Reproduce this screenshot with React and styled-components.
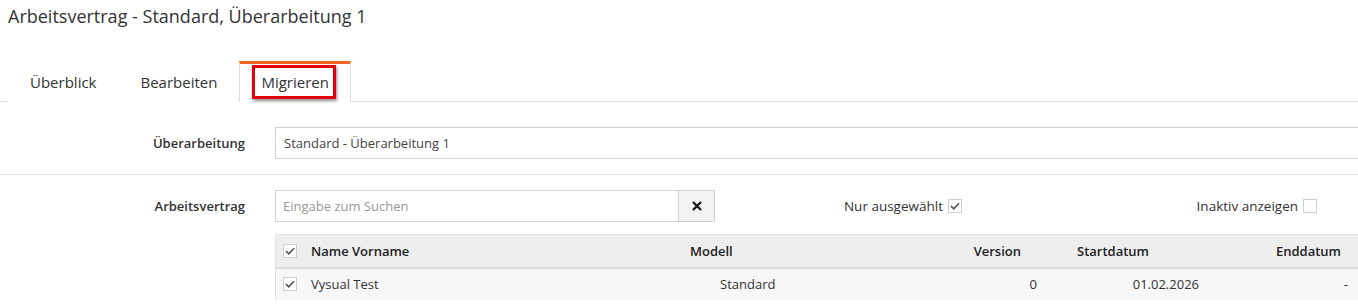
import React from 'react'
import styled, { createGlobalStyle } from 'styled-components'

const Global = createGlobalStyle`
  html, body {
    margin: 0;
    padding: 0;
    background: #fff;
    overflow: hidden;
  }
  body {
    font-family: "Open Sans", "Noto Sans", sans-serif;
    color: #333;
    font-size: 13px;
  }
`

const Page = styled.div`
  width: 1358px;
  height: 305px;
  overflow: hidden;
`

const Title = styled.h1`
  margin: 0;
  padding: 4px 0 0 8px;
  font-size: 18px;
  line-height: 24px;
  font-weight: 400;
  color: #333;
`

const TabBar = styled.div`
  display: flex;
  margin-top: 33px;
  padding-left: 8px;
  border-bottom: 1px solid #dedede;
  height: 40px;
`

const Tab = styled.div`
  display: flex;
  align-items: center;
  padding: 0 21px 3px;
  font-size: 15px;
  color: #333;
  border: 1px solid ${p => (p.$active ? '#dedede' : 'transparent')};
  border-top: 3px solid ${p => (p.$active ? '#f26522' : 'transparent')};
  border-bottom: none;
  background: #fff;
  margin-bottom: -1px;
  box-sizing: border-box;
  height: 41px;
`

const Marked = styled.span`
  display: inline-block;
  border: 3px solid #e2000b;
  box-shadow: 1px 2px 3px rgba(0, 0, 0, 0.45);
  height: 28px;
  line-height: 28px;
  padding: 0 4px 0 6px;
  margin: 1px -7px 0 -9px;
`

const FormRow = styled.div`
  display: flex;
  align-items: center;
  padding: ${p => p.$pad};
  border-bottom: ${p => (p.$line ? '1px solid #e6e6e6' : 'none')};
`

const Label = styled.div`
  width: 245px;
  flex: none;
  text-align: right;
  font-weight: 600;
  font-size: 13px;
  padding-right: 30px;
  box-sizing: content-box;
`

const Field = styled.div`
  flex: 1;
  height: 32px;
  border: 1px solid #d2d2d2;
  box-sizing: border-box;
  padding: 0 8px;
  display: flex;
  align-items: center;
  font-size: 13px;
  color: #444;
  margin-right: -20px;
`

const SearchGroup = styled.div`
  display: flex;
  width: 440px;
  flex: none;
`

const SearchInput = styled.div`
  width: 403px;
  height: 32px;
  border: 1px solid #d2d2d2;
  border-right: none;
  box-sizing: border-box;
  padding: 0 7px;
  display: flex;
  align-items: center;
  color: #999;
  font-size: 13px;
`

const ClearButton = styled.div`
  width: 37px;
  height: 32px;
  border: 1px solid #d2d2d2;
  box-sizing: border-box;
  background: #f2f2f2;
  display: flex;
  align-items: center;
  justify-content: center;
`

const Filter = styled.div`
  width: ${p => p.$w}px;
  flex: none;
  display: flex;
  justify-content: flex-end;
  align-items: center;
  gap: 5px;
  font-size: 13.5px;
  font-weight: 400;
  color: #333;
`

const Box = styled.span`
  display: inline-flex;
  align-items: center;
  justify-content: center;
  width: 14px;
  height: 14px;
  border: 1px solid #cfcfcf;
  box-sizing: border-box;
  background: #fff;
`

const Table = styled.div`
  margin: 12px 0 0 275px;
  width: 1100px;
  border-top: 1px solid #e2e2e2;
  border-left: 1px solid #e2e2e2;
`

const Cols = '27px 379px 250px 113px 170px 143px'

const HeadRow = styled.div`
  display: grid;
  grid-template-columns: ${Cols};
  height: 32px;
  align-items: center;
  background: #eeeeee;
  border-bottom: 2px solid #dcdcdc;
  font-weight: 600;
  font-size: 13px;
  color: #222;
`

const BodyRow = styled.div`
  display: grid;
  grid-template-columns: ${Cols};
  height: 30px;
  align-items: center;
  background: #f7f7f7;
  font-size: 13px;
  color: #333;
  padding-bottom: 1px;
`

const Cell = styled.div`
  text-align: ${p => p.$align || 'left'};
  padding: ${p => p.$pad || '0 8px'};
  white-space: nowrap;
`

const BoxCell = styled.div`
  display: flex;
  padding-left: 7px;
`

const Check = () => (
  <svg width="10" height="8" viewBox="0 0 10 8">
    <path d="M1 4.2 L3.8 6.8 L9 1.2" fill="none" stroke="#555" strokeWidth="1.6" />
  </svg>
)

const CheckBox = ({ checked }) => <Box>{checked && <Check />}</Box>

const Cross = () => (
  <svg width="10" height="10" viewBox="0 0 10 10">
    <path d="M1 1 L9 9 M9 1 L1 9" stroke="#111" strokeWidth="2.2" />
  </svg>
)

const rows = [
  { name: 'Vysual Test', modell: 'Standard', version: '0', start: '01.02.2026', end: '-' }
]

export default function App() {
  return (
    <Page>
      <Global />
      <Title>Arbeitsvertrag - Standard, Überarbeitung 1</Title>
      <TabBar>
        <Tab>Überblick</Tab>
        <Tab>Bearbeiten</Tab>
        <Tab $active>
          <Marked>Migrieren</Marked>
        </Tab>
      </TabBar>

      <FormRow $pad="25px 0 15px 0" $line>
        <Label>Überarbeitung</Label>
        <Field>Standard - Überarbeitung 1</Field>
      </FormRow>

      <FormRow $pad="15px 0 0 0">
        <Label>Arbeitsvertrag</Label>
        <SearchGroup>
          <SearchInput>Eingabe zum Suchen</SearchInput>
          <ClearButton>
            <Cross />
          </ClearButton>
        </SearchGroup>
        <Filter $w={247}>
          Nur ausgewählt <CheckBox checked />
        </Filter>
        <Filter $w={355}>
          Inaktiv anzeigen <CheckBox />
        </Filter>
      </FormRow>

      <Table>
        <HeadRow>
          <BoxCell>
            <CheckBox checked />
          </BoxCell>
          <Cell>Name Vorname</Cell>
          <Cell>Modell</Cell>
          <Cell $align="right" $pad="0 24px 0 0">Version</Cell>
          <Cell $pad="0 0 0 32px">Startdatum</Cell>
          <Cell $align="right" $pad="0 17px 0 0">Enddatum</Cell>
        </HeadRow>
        {rows.map(r => (
          <BodyRow key={r.name}>
            <BoxCell>
              <CheckBox checked />
            </BoxCell>
            <Cell>{r.name}</Cell>
            <Cell $pad="0 0 0 38px">{r.modell}</Cell>
            <Cell $align="right" $pad="0 8px 0 0">{r.version}</Cell>
            <Cell $align="right" $pad="0 16px 0 0">{r.start}</Cell>
            <Cell $align="right" $pad="0 10px 0 0">{r.end}</Cell>
          </BodyRow>
        ))}
      </Table>
    </Page>
  )
}
